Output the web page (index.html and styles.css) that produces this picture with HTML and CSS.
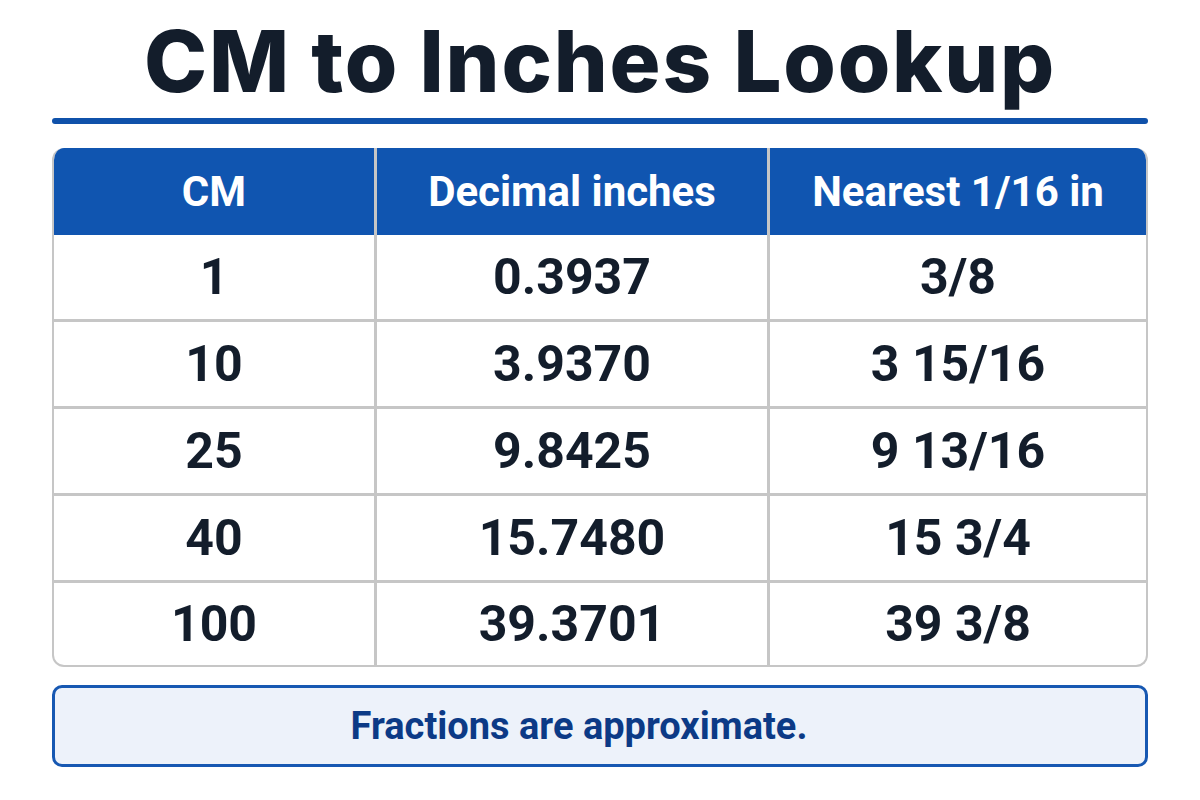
FILE: index.html
```html
<!DOCTYPE html>
<html>
<head>
<meta charset="utf-8">
<link rel="stylesheet" href="styles.css">
</head>
<body>
<main class="page">
  <h1 class="title">CM to Inches Lookup</h1>
  <div class="rule"></div>
  <div class="table-wrap">
    <table class="lookup">
      <thead>
        <tr><th class="c1">CM</th><th class="c2">Decimal inches</th><th class="c3">Nearest 1/16 in</th></tr>
      </thead>
      <tbody>
        <tr><td>1</td><td>0.3937</td><td>3/8</td></tr>
        <tr><td>10</td><td>3.9370</td><td>3 15/16</td></tr>
        <tr><td>25</td><td>9.8425</td><td>9 13/16</td></tr>
        <tr><td>40</td><td>15.7480</td><td>15 3/4</td></tr>
        <tr><td>100</td><td>39.3701</td><td>39 3/8</td></tr>
      </tbody>
    </table>
  </div>
  <div class="note">Fractions are approximate.</div>
</main>
</body>
</html>
```

FILE: styles.css
```css
html, body {
  margin: 0;
  padding: 0;
  background: #ffffff;
}

.page {
  width: 1096px;
  margin: 0 auto;
  display: flex;
  flex-direction: column;
}

.title {
  margin: 0;
  height: 118px;
  display: flex;
  align-items: center;
  justify-content: center;
  font-family: Inter, "Noto Sans", sans-serif;
  font-weight: 800;
  font-size: 85px;
  color: #131d2b;
  letter-spacing: 1.8px;
  padding-top: 5px;
  box-sizing: border-box;
}

.rule {
  height: 6px;
  background: #0f51aa;
  border-radius: 3px;
}

.table-wrap {
  margin-top: 24px;
  border: 2px solid #c6c6c6;
  border-top: none;
  border-radius: 12px;
  overflow: hidden;
}

.lookup {
  width: 100%;
  border-collapse: collapse;
  table-layout: fixed;
  font-family: Roboto, "Noto Sans", sans-serif;
}

.lookup th {
  background: #1055b0;
  color: #ffffff;
  font-weight: 700;
  font-size: 42px;
  height: 87px;
  padding: 0;
  border-left: 3px solid #c6c6c6;
}

.lookup th.c1 { width: 320px; border-left: none; }
.lookup th.c2 { width: 390px; }

.lookup td {
  height: 84px;
  padding: 0;
  text-align: center;
  font-weight: 700;
  font-size: 50px;
  color: #131d2b;
  border-left: 3px solid #c6c6c6;
  border-top: 3px solid #c6c6c6;
}

.lookup tbody tr:last-child td { height: 82px; }

.lookup tr td:first-child { border-left: none; }
.lookup tbody tr:first-child td { border-top: none; }

.note {
  margin-top: 18px;
  height: 82px;
  box-sizing: border-box;
  border: 3px solid #1758b2;
  border-radius: 10px;
  background: #edf2fa;
  display: flex;
  align-items: center;
  justify-content: center;
  padding-right: 42px;
  font-family: Roboto, "Noto Sans", sans-serif;
  font-weight: 700;
  font-size: 38px;
  color: #0c3a86;
}
```
